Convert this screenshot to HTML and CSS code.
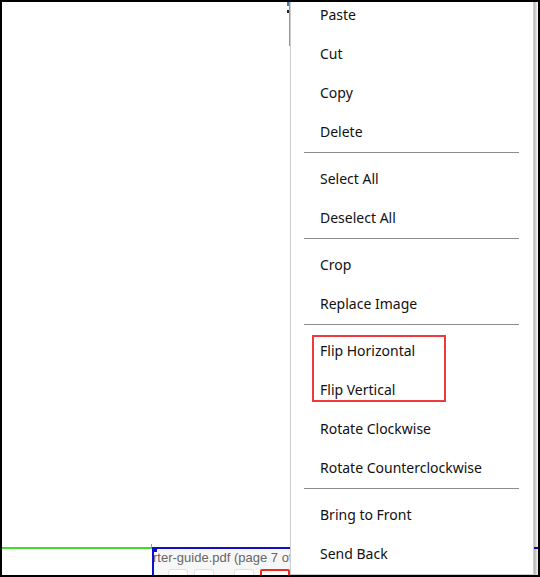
FILE: index.html
```html
<!DOCTYPE html>
<html lang="en">
<head>
    <meta charset="UTF-8">
    <meta name="viewport" content="width=device-width, initial-scale=1.0">
    <title>Context Menu</title>
    <link rel="stylesheet" href="styles.css">
</head>
<body>
    <div class="frame">
        <div class="canvas">
            <div class="guide-line">
                <span class="mark mark-blue"></span>
                <span class="mark mark-dark"></span>
            </div>
        </div>
        <div class="footer">
            <div class="footer-left"></div>
            <div class="footer-tab">
                <div class="tab-title">rter-guide.pdf (page 7 of 20)</div>
                <div class="tab-tools">
                    <span class="tool"></span>
                    <span class="tool"></span>
                    <span class="tool tool-gap"></span>
                    <span class="tool tool-red"></span>
                </div>
            </div>
        </div>

        <ul class="context-menu">
            <li>Paste</li>
            <li>Cut</li>
            <li>Copy</li>
            <li>Delete</li>
            <li class="separator"></li>
            <li>Select All</li>
            <li>Deselect All</li>
            <li class="separator"></li>
            <li>Crop</li>
            <li>Replace Image</li>
            <li class="separator"></li>
            <li>Flip Horizontal</li>
            <li>Flip Vertical</li>
            <li>Rotate Clockwise</li>
            <li>Rotate Counterclockwise</li>
            <li class="separator"></li>
            <li>Bring to Front</li>
            <li>Send Back</li>
        </ul>

        <div class="highlight"></div>
    </div>
</body>
</html>
```

FILE: styles.css
```css
/* General Reset */
* {
    margin: 0;
    padding: 0;
    box-sizing: border-box;
}

body {
    font-family: 'Noto Sans', sans-serif;
    background: white;
}

.frame {
    position: relative;
    width: 540px;
    height: 577px;
    border: 2px solid black;
    display: flex;
    flex-direction: column;
    overflow: hidden;
    background: white;
}

.canvas {
    flex: 1;
    position: relative;
}

/* thin line from the document behind the menu */
.guide-line {
    position: absolute;
    left: 287px;
    top: 0;
    width: 1px;
    height: 44px;
    background: #9a9a9a;
}

.guide-line .mark {
    position: absolute;
    left: -2px;
    width: 2px;
}

.guide-line .mark-blue {
    top: 0;
    height: 4px;
    background: #3a7fc4;
}

.guide-line .mark-dark {
    top: 8px;
    height: 3px;
    background: #222;
}

.footer {
    height: 28px;
    display: flex;
}

.footer-left {
    width: 150px;
    border-top: 2px solid #3fdc2c;
    position: relative;
}

.footer-left::after {
    content: '';
    position: absolute;
    right: 0;
    top: -5px;
    width: 1px;
    height: 5px;
    background: #3fdc2c;
}

.footer-tab {
    flex: 1;
    position: relative;
    border-top: 2px solid #1010c8;
    border-left: 2px solid #1010c8;
    background: #f7f7f7;
    overflow: hidden;
}

.footer-tab::before {
    content: '';
    position: absolute;
    left: 0;
    top: 0;
    width: 3px;
    height: 3px;
    background: #1010c8;
}

.tab-title {
    font-family: 'Liberation Sans', Arial, sans-serif;
    font-size: 13px;
    color: #666;
    white-space: nowrap;
    line-height: 16px;
    padding-top: 1px;
    margin-left: -1px;
}

.tab-tools {
    display: flex;
    gap: 6px;
    padding-left: 14px;
    margin-top: 3px;
}

.tool {
    width: 20px;
    height: 10px;
    background: white;
    border: 1px solid #e0e0e0;
    border-radius: 3px;
}

.tool-gap {
    margin-left: 14px;
}

.tool-red {
    width: 30px;
    border: 2px solid #ee2a22;
    border-radius: 2px;
}

/* Context menu */
.context-menu {
    position: absolute;
    left: 288px;
    top: -8px;
    width: 244px;
    list-style: none;
    background: white;
    border: 1px solid #cfcfcf;
    box-shadow: 2px 2px 3px rgba(0, 0, 0, 0.3);
    padding-bottom: 1px;
    font-size: 14px;
    color: #111;
}

.context-menu li {
    height: 39px;
    line-height: 39px;
    padding-left: 29px;
    white-space: nowrap;
}

.context-menu li.separator {
    height: 1px;
    margin: 1px 14px 6px 13px;
    background: #8c8c8c;
}

.highlight {
    position: absolute;
    left: 310px;
    top: 333px;
    width: 134px;
    height: 67px;
    border: 2px solid #f0393e;
}
```
